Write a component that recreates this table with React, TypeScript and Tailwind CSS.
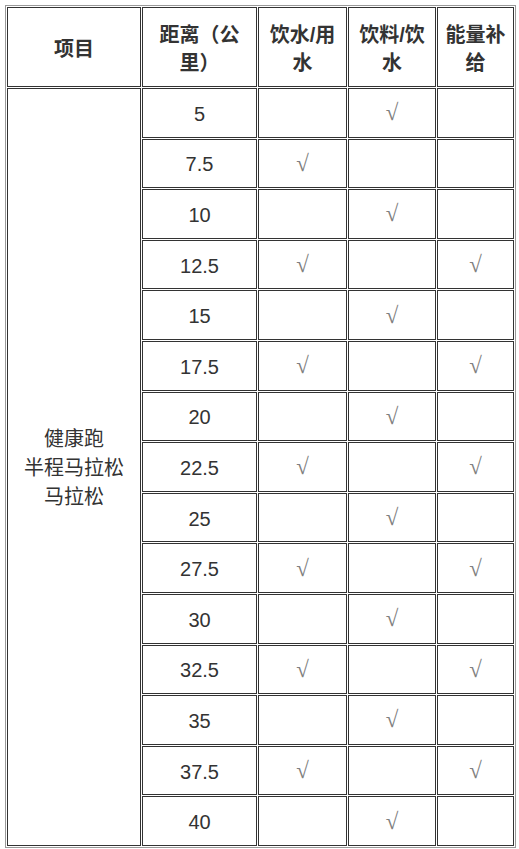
const rows: { km: string; water: boolean; drink: boolean; energy: boolean }[] = [
  { km: "5", water: false, drink: true, energy: false },
  { km: "7.5", water: true, drink: false, energy: false },
  { km: "10", water: false, drink: true, energy: false },
  { km: "12.5", water: true, drink: false, energy: true },
  { km: "15", water: false, drink: true, energy: false },
  { km: "17.5", water: true, drink: false, energy: true },
  { km: "20", water: false, drink: true, energy: false },
  { km: "22.5", water: true, drink: false, energy: true },
  { km: "25", water: false, drink: true, energy: false },
  { km: "27.5", water: true, drink: false, energy: true },
  { km: "30", water: false, drink: true, energy: false },
  { km: "32.5", water: true, drink: false, energy: true },
  { km: "35", water: false, drink: true, energy: false },
  { km: "37.5", water: true, drink: false, energy: true },
  { km: "40", water: false, drink: true, energy: false },
];

const cell = "flex items-center justify-center border border-[#333] bg-white text-center";
const head = `${cell} pt-[4px] text-[20px] font-bold leading-[28px]`;

function Check({ on }: { on: boolean }) {
  return (
    <div className={cell}>
      {on && (
        <span className="font-['Liberation_Serif',serif] text-[23px] leading-none text-[#808080]">
          √
        </span>
      )}
    </div>
  );
}

export default function App() {
  return (
    <div className="min-h-screen bg-white pt-[5px] pl-[5px] font-['Liberation_Sans','Noto_Sans_CJK_SC',sans-serif] text-[#333]">
      <div className="grid w-[511px] grid-cols-[134px_115px_89px_88px_77px] grid-rows-[80px_repeat(15,49.6px)] gap-px border border-[#999] p-px">
        <div className={head}>项目</div>
        <div className={head}>
          距离（公
          <br />
          里）
        </div>
        <div className={head}>
          饮水/用
          <br />
          水
        </div>
        <div className={head}>
          饮料/饮
          <br />
          水
        </div>
        <div className={head}>
          能量补
          <br />
          给
        </div>

        <div className={`${cell} row-span-15 pt-[4px] text-[20px] leading-[29px]`}>
          健康跑
          <br />
          半程马拉松
          <br />
          马拉松
        </div>

        {rows.map((r, i) => (
          <div key={r.km} className="contents">
            <div
              className={`${cell} col-start-2 pt-[2px] text-[20px]`}
              style={{ gridRowStart: i + 2 }}
            >
              {r.km}
            </div>
            <Check on={r.water} />
            <Check on={r.drink} />
            <Check on={r.energy} />
          </div>
        ))}
      </div>
    </div>
  );
}
